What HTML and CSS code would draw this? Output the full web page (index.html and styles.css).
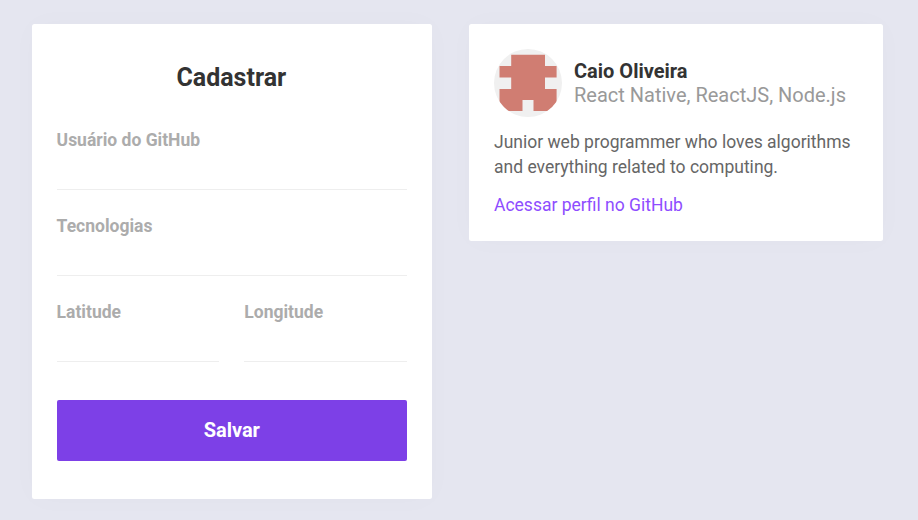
FILE: index.html
```html
<!DOCTYPE html>
<html lang="pt-BR">
<head>
<meta charset="utf-8">
<title>DevRadar</title>
<link rel="stylesheet" href="styles.css">
</head>
<body>
<div class="app">
  <aside class="card form-card">
    <h1>Cadastrar</h1>
    <form>
      <div class="field">
        <label for="github">Usuário do GitHub</label>
        <input id="github">
      </div>
      <div class="field">
        <label for="techs">Tecnologias</label>
        <input id="techs">
      </div>
      <div class="field-group">
        <div class="field">
          <label for="latitude">Latitude</label>
          <input id="latitude">
        </div>
        <div class="field">
          <label for="longitude">Longitude</label>
          <input id="longitude">
        </div>
      </div>
      <button type="button">Salvar</button>
    </form>
  </aside>
  <main>
    <article class="card dev">
      <header>
        <svg class="avatar" viewBox="0 0 68 68" aria-hidden="true">
          <rect width="68" height="68" fill="#f0f0f0"/>
          <path fill="#d07d72" d="M17.2 5.7H51V17H62.6V28.5H51V40H62.6V62H39.5V51H28.5V62H5.5V40H17.2V28.5H5.5V17H17.2Z"/>
        </svg>
        <div class="info">
          <strong>Caio Oliveira</strong>
          <span>React Native, ReactJS, Node.js</span>
        </div>
      </header>
      <p>Junior web programmer who loves algorithms and everything related to computing.</p>
      <a href="#">Acessar perfil no GitHub</a>
    </article>
  </main>
</div>
</body>
</html>
```
FILE: styles.css
```css
* {
  box-sizing: border-box;
  margin: 0;
  padding: 0;
}

body {
  background: #e5e6f0;
  font-family: Roboto, sans-serif;
  height: 520px;
  overflow: hidden;
}

.app {
  display: flex;
  align-items: flex-start;
  gap: 37px;
  padding: 24px 35px 0 32px;
}

.card {
  background: #fff;
  border-radius: 2.5px;
  box-shadow: 0 0 30px rgba(0, 0, 0, 0.02);
}

.form-card {
  width: 400px;
  height: 475px;
  padding: 39px 25px 0 24.6px;
}

h1 {
  font-size: 25px;
  line-height: 30px;
  font-weight: bold;
  padding-right: 1px;
  color: #333;
  text-align: center;
}

form {
  margin-top: 36px;
}

.field {
  flex: 1;
  height: 61px;
  margin-bottom: 25px;
  border-bottom: 1px solid #eee;
}

label {
  display: block;
  font-size: 17.5px;
  line-height: 22px;
  font-weight: bold;
  color: #acacac;
}

input {
  display: block;
  width: 100%;
  height: 38px;
  border: 0;
  background: transparent;
  outline: 0;
}

.field-group {
  display: flex;
  gap: 25px;
}

button {
  display: block;
  width: 100%;
  height: 61px;
  margin-top: 13px;
  border: 0;
  border-radius: 2px;
  background: #7d40e7;
  color: #fff;
  font: bold 20px/61px Roboto, sans-serif;
}

main {
  flex: 1;
}

.dev {
  height: 217px;
  padding: 25px;
}

.dev header {
  display: flex;
  align-items: center;
}

.avatar {
  width: 68px;
  height: 68px;
  border-radius: 50%;
}

.info {
  margin-left: 12px;
}

.info strong,
.info span {
  display: block;
  font-size: 20px;
  line-height: 24px;
  white-space: nowrap;
}

.info strong {
  font-weight: bold;
  color: #333;
}

.info span {
  color: #999;
}

.dev p {
  margin-top: 13px;
  font-size: 17.5px;
  line-height: 25px;
  color: #666;
}

.dev a {
  display: block;
  margin-top: 15px;
  font-size: 17.5px;
  line-height: 21px;
  color: #8e4dff;
  text-decoration: none;
}
```
